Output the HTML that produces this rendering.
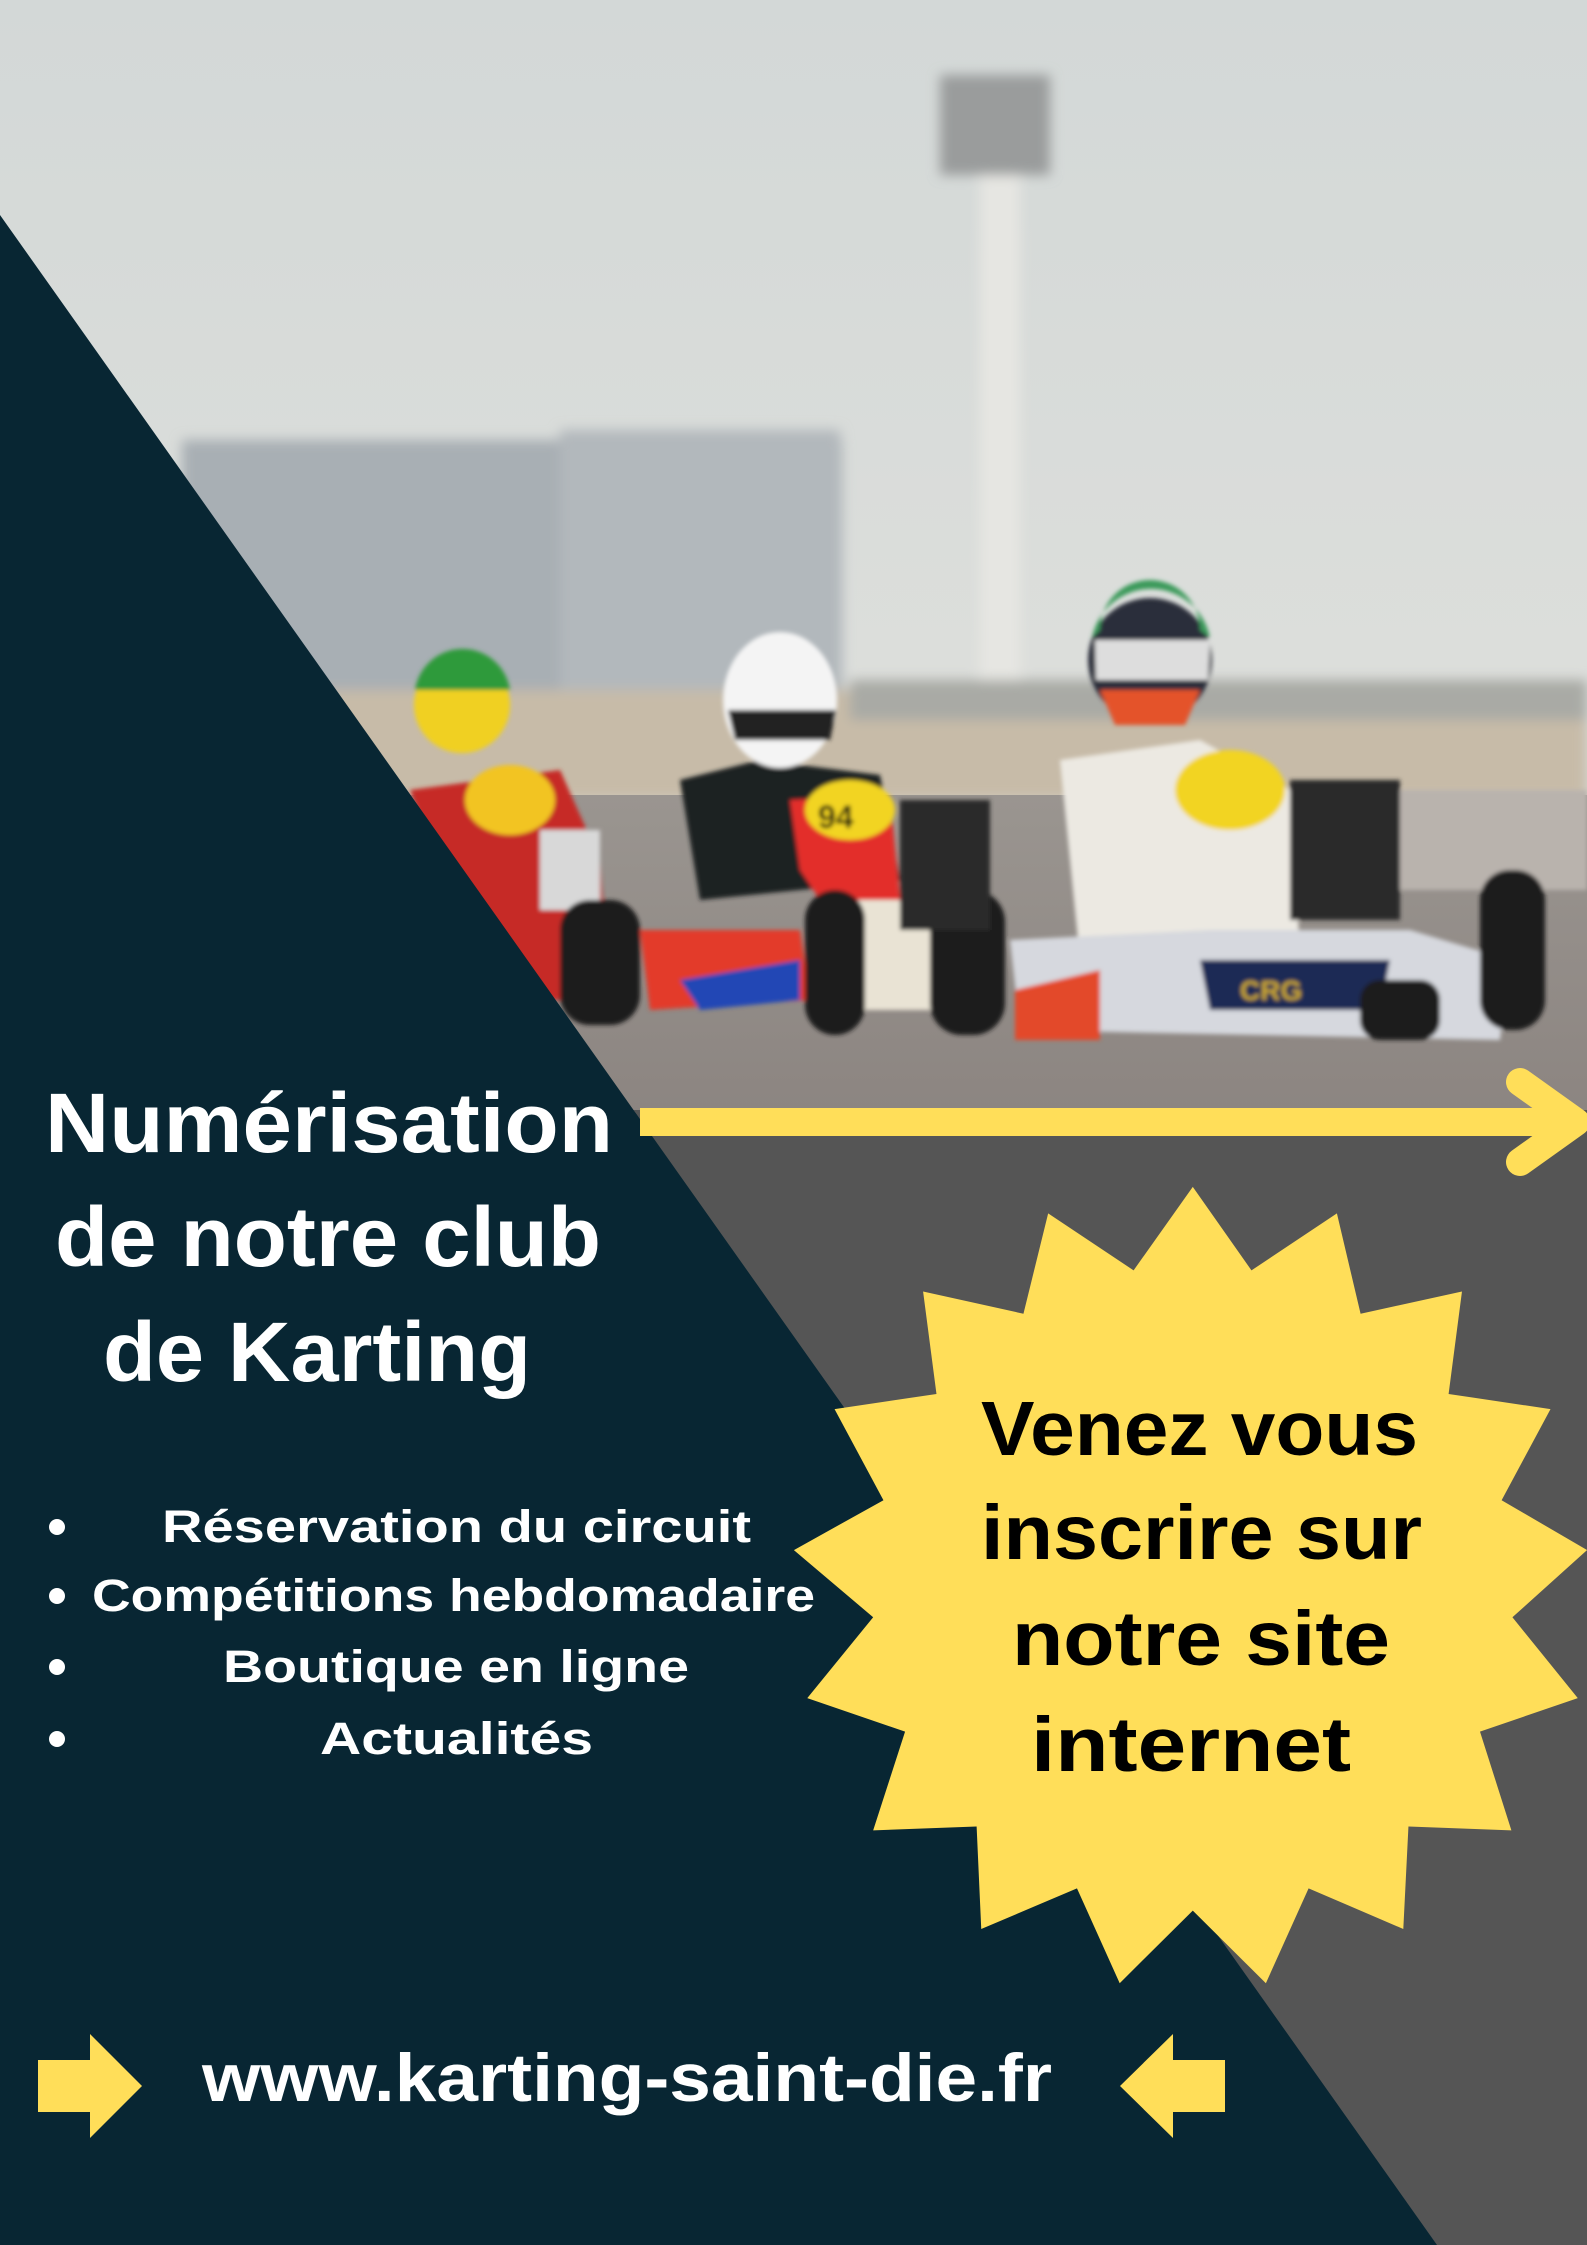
<!DOCTYPE html>
<html><head><meta charset="utf-8"><style>
html,body{margin:0;padding:0;background:#082633;}
svg{display:block}
</style></head><body>
<svg width="1587" height="2245" viewBox="0 0 1587 2245" xmlns="http://www.w3.org/2000/svg" font-family="'Liberation Sans', sans-serif" font-weight="bold">
<defs>
<linearGradient id="sky" x1="0" y1="0" x2="0" y2="1">
<stop offset="0" stop-color="#d3d8d7"/><stop offset="0.6" stop-color="#dcdedb"/><stop offset="1" stop-color="#d6d6d2"/>
</linearGradient>
<linearGradient id="road" x1="0" y1="0" x2="0" y2="1">
<stop offset="0" stop-color="#9a9590"/><stop offset="1" stop-color="#8c8581"/>
</linearGradient>
<filter id="bl"><feGaussianBlur stdDeviation="6"/></filter>
<filter id="bl2"><feGaussianBlur stdDeviation="2"/></filter>
</defs>
<!-- photo -->
<rect x="0" y="0" width="1587" height="1110" fill="url(#sky)"/>
<g filter="url(#bl)">
<rect x="182" y="440" width="660" height="265" fill="#a8afb4"/>
<rect x="560" y="430" width="280" height="275" fill="#b2b8bc"/>
<rect x="980" y="170" width="40" height="620" fill="#e6e6e2"/>
<rect x="940" y="75" width="110" height="100" fill="#9a9c9c"/>
<rect x="0" y="690" width="1587" height="110" fill="#c7bba8"/>
<rect x="850" y="680" width="737" height="40" fill="#a9aaa5"/>
</g>
<rect x="0" y="795" width="1587" height="315" fill="url(#road)"/>
<!-- karts -->
<g filter="url(#bl2)">
<rect x="1380" y="790" width="207" height="100" fill="#b9b3ad"/>
<!-- back kart -->
<path d="M410 790 L560 770 L600 860 L610 1000 L520 1000 L450 900Z" fill="#c62a25"/>
<ellipse cx="510" cy="800" rx="45" ry="35" fill="#f2c423"/>
<circle cx="462" cy="705" r="48" fill="#f0d020"/>
<path d="M415 690 A48 48 0 0 1 510 690Z" fill="#2f9a3a"/>
<rect x="540" y="830" width="60" height="80" fill="#d8d8d8"/>
<rect x="560" y="900" width="80" height="125" rx="30" fill="#1b1b1b"/>
<path d="M640 930 L800 930 L810 1000 L650 1010Z" fill="#e33a2a"/>
<path d="M680 980 L800 960 L800 1000 L700 1010Z" fill="#2246b5"/>
<!-- middle kart -->
<path d="M680 780 L760 760 L880 775 L900 880 L700 900Z" fill="#1f2024"/>
<ellipse cx="780" cy="700" rx="57" ry="68" fill="#f4f4f4"/>
<path d="M728 710 L836 710 L830 740 L735 740Z" fill="#222"/>
<path d="M790 800 L890 795 L900 900 L860 960 L800 870Z" fill="#e32e2a"/>
<ellipse cx="850" cy="810" rx="45" ry="30" fill="#f2d422"/>
<text x="818" y="828" font-size="32" fill="#111">94</text>
<rect x="820" y="900" width="130" height="110" fill="#e9e3d4"/>
<rect x="805" y="890" width="60" height="145" rx="30" fill="#1a1a1a"/>
<rect x="930" y="890" width="75" height="145" rx="32" fill="#1a1a1a"/>
<rect x="900" y="800" width="90" height="130" fill="#2b2b2b"/>
<!-- front kart -->
<path d="M1060 760 L1200 740 L1290 790 L1300 950 L1080 960Z" fill="#ece9e2"/>
<circle cx="1150" cy="660" r="62" fill="#2a2f3a"/>
<path d="M1095 640 L1210 640 L1208 680 L1096 680Z" fill="#ddd"/>
<path d="M1100 690 L1200 690 L1185 725 L1115 725Z" fill="#e4532a"/>
<path d="M1092 638 A60 60 0 0 1 1210 638 L1200 630 A50 50 0 0 0 1100 630Z" fill="#3a9a5a"/>
<ellipse cx="1230" cy="790" rx="55" ry="40" fill="#f2d422"/>
<rect x="1290" y="780" width="110" height="140" fill="#2a2a2a"/>
<path d="M1010 940 L1210 930 L1410 930 L1510 960 L1500 1040 L1020 1030Z" fill="#d6d8de"/>
<path d="M1200 960 L1390 960 L1380 1010 L1210 1010Z" fill="#1f2a54"/>
<text x="1240" y="1000" font-size="28" fill="#c9a52a">CRG</text>
<path d="M1015 990 L1100 970 L1100 1040 L1015 1040Z" fill="#e34a2a"/>
<rect x="1480" y="870" width="65" height="160" rx="30" fill="#1a1a1a"/>
<rect x="1360" y="980" width="80" height="60" rx="20" fill="#1a1a1a"/>
</g>
<!-- grey lower right -->
<rect x="0" y="1110" width="1587" height="1135" fill="#555555"/>
<!-- navy triangle -->
<polygon points="0,215 1437,2245 0,2245" fill="#082633"/>
<!-- yellow arrow -->
<rect x="640" y="1108" width="940" height="28" fill="#ffde59"/>
<polyline points="1520,1082 1576,1122 1520,1162" fill="none" stroke="#ffde59" stroke-width="28" stroke-linecap="round" stroke-linejoin="round"/>
<!-- starburst -->
<g transform="translate(780,1150) scale(0.5147,0.5421)">
<polygon fill="#ffde59" points="802,68 916,222 1082,117 1128,302 1325,261 1299,450 1497,478 1402,646 1568,738 1423,862 1550,1011 1360,1073 1421,1255 1221,1248 1211,1437 1027,1362 944,1537 802,1403 660,1537 577,1362 391,1437 382,1248 181,1255 243,1073 53,1011 181,862 27,738 201,646 106,478 304,450 278,261 473,302 521,117 687,222"/>
</g>
<!-- star text -->
<g fill="#000" font-size="77">
<text x="981" y="1455" textLength="437" lengthAdjust="spacingAndGlyphs">Venez vous</text>
<text x="981" y="1559" textLength="441" lengthAdjust="spacingAndGlyphs">inscrire sur</text>
<text x="1012" y="1665" textLength="378" lengthAdjust="spacingAndGlyphs">notre site</text>
<text x="1031" y="1771" textLength="320" lengthAdjust="spacingAndGlyphs">internet</text>
</g>
<!-- title -->
<g fill="#fff" font-size="84">
<text x="45" y="1152" textLength="568" lengthAdjust="spacingAndGlyphs">Numérisation</text>
<text x="55" y="1266" textLength="546" lengthAdjust="spacingAndGlyphs">de notre club</text>
<text x="103" y="1381" textLength="428" lengthAdjust="spacingAndGlyphs">de Karting</text>
</g>
<!-- bullets -->
<g fill="#fff" font-size="45">
<circle cx="57" cy="1527" r="8"/><circle cx="57" cy="1596" r="8"/><circle cx="57" cy="1667" r="8"/><circle cx="57" cy="1739" r="8"/>
<text x="162" y="1542" textLength="589" lengthAdjust="spacingAndGlyphs">Réservation du circuit</text>
<text x="92" y="1611" textLength="723" lengthAdjust="spacingAndGlyphs">Compétitions hebdomadaire</text>
<text x="223" y="1682" textLength="466" lengthAdjust="spacingAndGlyphs">Boutique en ligne</text>
<text x="320" y="1754" textLength="273" lengthAdjust="spacingAndGlyphs">Actualités</text>
</g>
<!-- bottom arrows -->
<polygon fill="#ffde59" points="38,2060 90,2060 90,2034 142,2086 90,2138 90,2112 38,2112"/>
<polygon fill="#ffde59" points="1225,2060 1173,2060 1173,2034 1120,2086 1173,2138 1173,2112 1225,2112"/>
<text x="202" y="2101" font-size="68" fill="#fff" textLength="850" lengthAdjust="spacingAndGlyphs">www.karting-saint-die.fr</text>
</svg>
</body></html>
